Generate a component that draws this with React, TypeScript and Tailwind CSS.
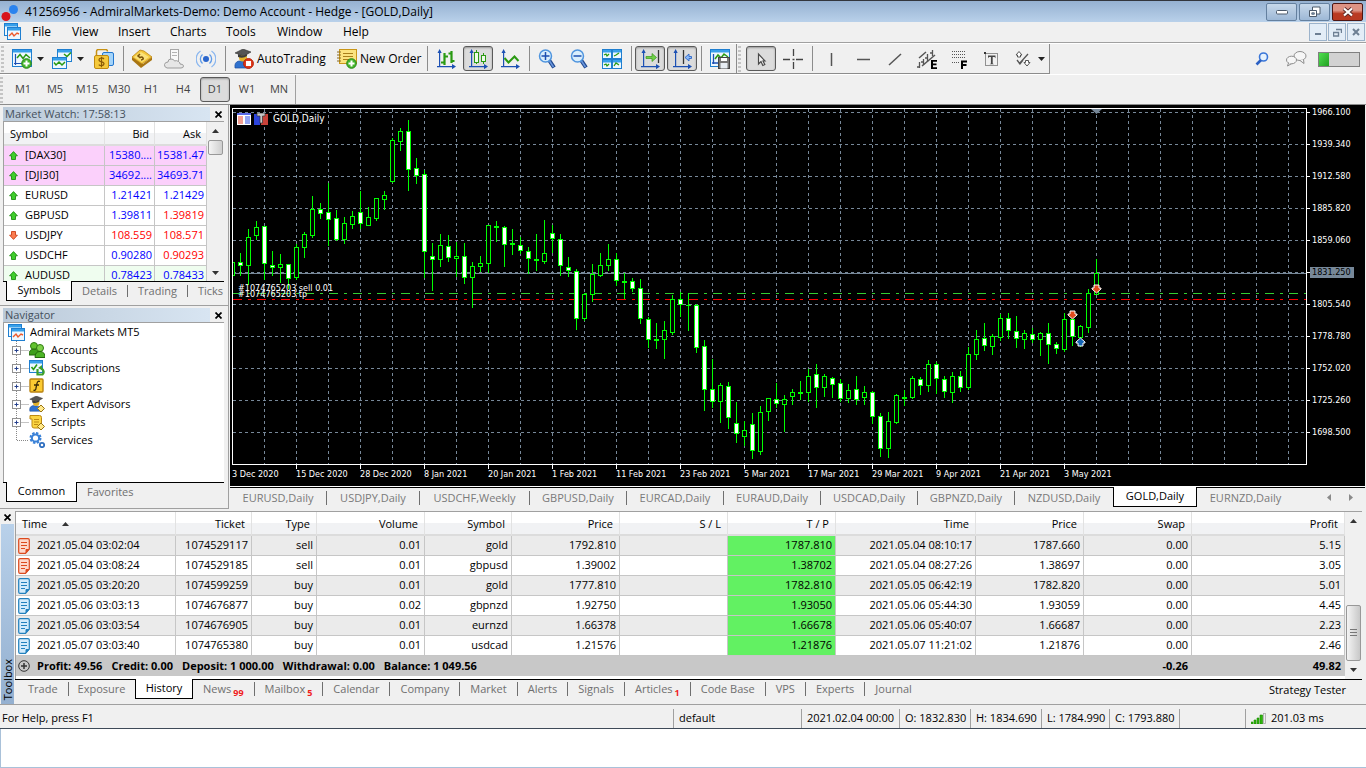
import React from "react";

type Svg = React.ReactNode;

function Icon({ children, size = 20 }: { children: Svg; size?: number }) {
  return (
    <svg width={size} height={size} viewBox={`0 0 ${size} ${size}`} aria-hidden="true" className="shrink-0">
      {children}
    </svg>
  );
}

/* ---------- icon pieces ---------- */

function MiniWindow({ x, y, w, h }: { x: number; y: number; w: number; h: number }) {
  return (
    <g>
      <rect x={x + 0.5} y={y + 0.5} width={w - 1} height={h - 1} fill="#eef8ff" stroke="#1f7fd0" />
      <rect x={x + 1} y={y + 1} width={w - 2} height={2.5} fill="#38a0ea" />
    </g>
  );
}

function PlusBadge({ cx, cy, r = 5 }: { cx: number; cy: number; r?: number }) {
  return (
    <g>
      <circle cx={cx} cy={cy} r={r} fill="#43b52b" stroke="#2a8718" />
      <path d={`M${cx - 3} ${cy}h6M${cx} ${cy - 3}v6`} stroke="#fff" strokeWidth="2" />
    </g>
  );
}

function Axes() {
  return (
    <g fill="#1c50b4">
      <path d="M3 2h1.200v16H3zM1 17h17v1.200H1z" />
      <path d="M1.500 4L3.600 0l2.100 4zM16 15l4 2.600-4 2.600z" />
    </g>
  );
}

const AppLogo = () => (
  <Icon size={18}>
    <circle cx="13.500" cy="6.500" r="4.500" fill="#2b83ee" />
    <circle cx="6" cy="13.500" r="4.500" fill="#d8141c" />
  </Icon>
);

const MtIcon = () => (
  <Icon size={18}>
    <MiniWindow x={0} y={0} w={14} h={13} />
    <MiniWindow x={3} y={4} w={14} h={13} />
    <path d="M5 13l3-3 2 3 3-3 2 1" fill="none" stroke="#ee5a2c" strokeWidth="1.4" />
  </Icon>
);

const NewChartIcon = () => (
  <Icon>
    <MiniWindow x={0} y={0} w={20} h={18} />
    <path d="M3.500 5v11M2 14.500h8" stroke="#1c50b4" strokeWidth="1.200" />
    <path d="M5 9l3-3.500 3 4 3-4 4 3.500" fill="none" stroke="#2a9a12" strokeWidth="1.500" />
    <PlusBadge cx={14.5} cy={14.5} r={4.800} />
  </Icon>
);

const ProfilesIcon = () => (
  <Icon>
    <MiniWindow x={5} y={0} w={15} h={13} />
    <path d="M12 5l3 2.500 4-4" fill="none" stroke="#2a9a12" strokeWidth="1.500" />
    <MiniWindow x={0} y={8} w={15} h={12} />
    <path d="M2 13.500l2 2.500 3-3 3 3 3-3" fill="none" stroke="#2a9a12" strokeWidth="1.500" />
  </Icon>
);

const DollarIcon = () => (
  <Icon>
    <path d="M2.500 8V2.500q0-2 2-2h7q2 0 2 2" fill="none" stroke="#c79112" strokeWidth="1.500" />
    <rect x="8.500" y="3.500" width="11" height="13" rx="1.500" fill="#a4d4fa" stroke="#2377cf" />
    <path d="M2 6.500h11q1.500 0 1.500 1.500v10q0 1.500-1.500 1.500H2q-1.500 0-1.500-1.500V8q0-1.500 1.500-1.500z" fill="#f5c93c" stroke="#c08a10" />
    <path d="M10 10q-1-1.200-3-1-2 .2-2 1.800t2.500 2 2.500 2-2.200 1.900q-2 .1-3-1.100M7.500 7.800v10.500" fill="none" stroke="#8a5a06" strokeWidth="1.200" />
  </Icon>
);

const DepthIcon = () => (
  <Icon>
    <path d="M0 11l9 8 11-8v-3L11 15 0 8z" fill="#a87512" />
    <path d="M0 8l8-7 4 1 8 6-10 7z" fill="#f4c93d" stroke="#bb8414" strokeWidth=".8" />
    <path d="M2 8l7-5 8 5-7 5z" fill="#fbe27a" />
    <path d="M8 5l-2 2 2 1.500q2-1 3 .5t-2 2" fill="none" stroke="#7a5208" strokeWidth="1.500" />
  </Icon>
);

const CloudIcon = () => (
  <Icon>
    <rect x="6.500" y=".5" width="8" height="13" fill="#fafafa" stroke="#a7a7a7" />
    <path d="M8 3.500h5M8 6.500h5" stroke="#b4b4b4" />
    <path d="M3 19q-3-1-2.500-3.500T4 13q0-3 3-3t3.500 2q2-1 4 .5t1.500 2.500q3.500 0 3.500 2t-2.500 2z" fill="#e6e6e6" stroke="#9c9c9c" />
  </Icon>
);

const SignalIcon = () => (
  <Icon>
    <circle cx="10" cy="10" r="3" fill="#2a66cc" />
    <g fill="none" stroke="#5f9be8" strokeWidth="1.300">
      <path d="M6.500 5.500a5.800 5.800 0 000 9M13.500 5.500a5.800 5.800 0 010 9" />
      <path d="M4.500 2a9.600 9.600 0 000 16M15.500 2a9.600 9.600 0 010 16" stroke="#8bb7ef" />
    </g>
  </Icon>
);

const Professor = () => (
  <g>
    <path d="M1 19q-1-6 4-7l8 1 3 6z" fill="#2f72cf" stroke="#1c4f9e" strokeWidth=".7" />
    <circle cx="9" cy="8.500" r="4" fill="#e0b12a" />
    <path d="M1 4l8-4 8 3-7 4z" fill="#555" stroke="#333" strokeWidth=".6" />
    <path d="M4 5v3q5 2 9-1V5l-4 2z" fill="#3c3c3c" />
  </g>
);

const AutoTradingIcon = () => (
  <Icon>
    <Professor />
    <circle cx="14.500" cy="14.500" r="4.900" fill="#e03a1c" stroke="#b52008" />
    <rect x="12" y="12" width="5" height="5" fill="#fff" />
  </Icon>
);

const NewOrderIcon = () => (
  <Icon>
    <rect x="2.500" y=".5" width="17" height="14" fill="#fbe37f" stroke="#c99618" />
    <path d="M6 4.500h10M6 7.500h10M6 10.500h6" stroke="#a87f1a" />
    <path d="M0 3h4M0 6h4M0 9h4M0 12h4" stroke="#8a6a20" />
    <PlusBadge cx={14.5} cy={14.5} r={4.800} />
  </Icon>
);

const BarsIcon = () => (
  <Icon>
    <Axes />
    <path d="M8.500 4v12M5 13.500h3M9 7.500h3M15.500 2v12M12.500 4.500h3M16 12h2.500" stroke="#2a9a12" strokeWidth="2.200" />
  </Icon>
);

const CandlesIcon = () => (
  <Icon>
    <Axes />
    <path d="M8.500 1v14M15.500 4v11" stroke="#2a9a12" />
    <rect x="6.500" y="3.500" width="4" height="10" fill="#eefbe9" stroke="#2a9a12" />
    <rect x="13.500" y="6.500" width="4" height="6" fill="#eefbe9" stroke="#2a9a12" />
  </Icon>
);

const LineIcon = () => (
  <Icon>
    <Axes />
    <path d="M4.500 9l4 4.500 6-6 4 4.500" fill="none" stroke="#2a9a12" strokeWidth="2" />
  </Icon>
);

function ZoomIcon({ plus }: { plus: boolean }) {
  return (
    <Icon>
      <path d="M11 11l5 7.500" stroke="#224a90" strokeWidth="4" />
      <path d="M11.500 12l4 6" stroke="#6a97de" strokeWidth="1.500" />
      <circle cx="7.500" cy="7" r="6" fill="#d9eefc" stroke="#4e94de" strokeWidth="1.500" />
      <path d={plus ? "M3.500 7h8M7.500 3v8" : "M3.500 7h8"} stroke="#1c4fb0" strokeWidth="1.500" />
    </Icon>
  );
}

const TileIcon = () => (
  <Icon>
    <MiniWindow x={0} y={0} w={10} h={10} />
    <MiniWindow x={10} y={0} w={10} h={10} />
    <MiniWindow x={0} y={10} w={10} h={10} />
    <MiniWindow x={10} y={10} w={10} h={10} />
    <path d="M2 6l2-1 1 2 2-2M12 7l2-1 3-2M2 16l2-1 1 2 2-2M12 17l2-3 3 2" fill="none" stroke="#2a9a12" strokeWidth="1.300" />
  </Icon>
);

const ShiftEndIcon = () => (
  <Icon>
    <Axes />
    <path d="M18.500 1v13" stroke="#333" strokeWidth="1.300" />
    <path d="M6 7.500h6V4.500l4.500 4-4.500 4v-3H6z" fill="#6fd048" stroke="#39951b" strokeWidth=".7" />
  </Icon>
);

const ShiftIcon = () => (
  <Icon>
    <Axes />
    <path d="M11.500 1v14" stroke="#333" strokeWidth="1.300" />
    <path d="M19.500 7.500H17V5l-4 3.500 4 3.500V9.500h2.500z" fill="#8ab9f7" stroke="#2b65c8" strokeWidth=".9" />
  </Icon>
);

const SaveTemplateIcon = () => (
  <Icon>
    <MiniWindow x={0} y={0} w={20} h={18} />
    <path d="M3.500 5v10M2 14h6" stroke="#1c50b4" strokeWidth="1.300" />
    <path d="M5 10l3-4 3 3 3-4 4 3" fill="none" stroke="#2a9a12" strokeWidth="1.500" />
    <rect x="8.500" y="8.500" width="11" height="11" fill="#777" stroke="#444" />
    <rect x="11" y="9" width="6" height="3" fill="#fff" />
    <rect x="10.500" y="14" width="7" height="5.500" fill="#e8eef4" />
  </Icon>
);

const CursorIcon = () => (
  <Icon>
    <path d="M7.500 5v10l2.500-2.500 1.800 4 2-1-1.800-3.500H14z" fill="#f4f4f4" stroke="#4a4a4a" strokeWidth="1.200" />
  </Icon>
);

const CrosshairIcon = () => (
  <Icon>
    <path d="M0 10.500h7M13 10.500h7M10.500 0v7M10.500 13v7M9.500 10.500h2" stroke="#444" strokeWidth="1.300" />
  </Icon>
);

const VLineIcon = () => (
  <Icon>
    <path d="M10.500 4v13" stroke="#555" strokeWidth="1.500" />
  </Icon>
);
const HLineIcon = () => (
  <Icon>
    <path d="M4 10.500h13" stroke="#555" strokeWidth="1.500" />
  </Icon>
);
const TrendIcon = () => (
  <Icon>
    <path d="M4 16L16 5" stroke="#555" strokeWidth="1.500" />
  </Icon>
);

const ChannelIcon = () => (
  <Icon>
    <path d="M2 9l7-6M5 17L18 6" stroke="#555" strokeWidth="1.500" />
    <path d="M2.500 13v6M6.500 10v6M10.500 5v8M15.500 1v6M0 18h3M4 13h3M8 9h3M13 4h3" stroke="#555" strokeWidth="1.300" />
    <path d="M14 11h6v1.800h-4v1.700h3.500v1.700H16v2h4V20h-6z" fill="#000" />
  </Icon>
);

const FiboIcon = () => (
  <Icon>
    <path d="M3 2.500h14M3 5.500h14M3 8.500h14M3 13.500h7" stroke="#555" strokeDasharray="1 1" />
    <path d="M12 11.500h6v2h-4V15h3.500v2H14v3h-2z" fill="#000" />
  </Icon>
);

const TextIcon = () => (
  <Icon>
    <rect x="4.500" y="4.500" width="12" height="12" fill="none" stroke="#333" strokeDasharray="1 1" />
    <path d="M7 6.500h7.500v2.800l-1-1.300H11.700v6.500l1.300.8H8.600l1.300-.8V8H8l-1 1.300z" fill="#444" />
    <rect x="3" y="3" width="2" height="2" fill="#333" />
  </Icon>
);

const ShapesIcon = () => (
  <Icon>
    <path d="M6 15l9-10M4 11l3 4 3-4" fill="none" stroke="#555" strokeWidth="1.300" />
    <path d="M3 6l3-3.500L9 6H7.500v2h-3V6zM11 13.500l3 3.500 3-3.500h-1.500v-2h-3v2z" fill="#fff" stroke="#555" />
  </Icon>
);

const Caret = () => (
  <svg width="7" height="4" viewBox="0 0 7 4" aria-hidden="true" className="shrink-0">
    <path d="M0 0h7L3.500 4z" fill="#222" />
  </svg>
);

const SearchIcon = () => (
  <Icon size={14}>
    <circle cx="8.500" cy="5" r="4" fill="#e6f2fd" stroke="#3a76d8" strokeWidth="1.600" />
    <path d="M6 8l-4.500 4.500" stroke="#2b60c4" strokeWidth="2.600" />
  </Icon>
);

const ChatIcon = () => (
  <Icon size={22}>
    <ellipse cx="15" cy="8" rx="6" ry="4.500" fill="#f6f6f6" stroke="#8e8e8e" />
    <path d="M15 12.500l4 3-.5-4" fill="#f6f6f6" stroke="#8e8e8e" />
    <ellipse cx="6.500" cy="12" rx="5" ry="3.800" fill="#f6f6f6" stroke="#8e8e8e" />
    <path d="M3.500 15l-1 3 4-2.300" fill="#f6f6f6" stroke="#8e8e8e" />
  </Icon>
);

/* ---------- toolbar ---------- */

function ToolButton({ label, active = false, children }: { label: string; active?: boolean; children: Svg }) {
  return (
    <button
      aria-label={label}
      className={
        active
          ? "mx-px flex h-[25px] w-[30px] shrink-0 items-center justify-center rounded-[3px] border border-[#5a5a5a] bg-[#dcdcdc] shadow-[inset_0_1px_2px_#999]"
          : "flex h-[25px] w-8 shrink-0 items-center justify-center"
      }
    >
      {children}
    </button>
  );
}

const Sep = () => <span className="mr-[2px] ml-[3px] h-[25px] w-px shrink-0 bg-[#8c8c8c]" />;
const Grip = () => (
  <span className="mr-1 h-[26px] w-[3px] shrink-0 bg-[repeating-linear-gradient(180deg,#c4c4c4_0px,#c4c4c4_2px,transparent_2px,transparent_4px)]" />
);

const menus = ["File", "View", "Insert", "Charts", "Tools", "Window", "Help"];
const menuWidths = ["w-10", "w-[46px]", "w-[52px]", "w-14", "w-[51px]", "w-[66px]", "w-10"];
const timeframes = ["M1", "M5", "M15", "M30", "H1", "H4", "D1", "W1", "MN"];

function TitleBar() {
  const button = "flex h-[18px] w-[31px] items-center justify-center rounded-[2px] border";
  return (
    <header className="flex h-[22px] shrink-0 items-center justify-between border-t border-[#33363c] bg-linear-to-b from-[#96b1d1] to-[#b9d1ea] pr-[3px]">
      <div className="flex items-center gap-[7px]">
        <AppLogo />
        <h1 className="text-[12px] whitespace-nowrap">41256956 - AdmiralMarkets-Demo: Demo Account - Hedge - [GOLD,Daily]</h1>
      </div>
      <div className="flex gap-[2px]">
        <button aria-label="Minimize" className={`${button} border-[#64809f] bg-linear-to-b from-[#c7d8ea] to-[#9db8d6]`}>
          <svg width="12" height="6" aria-hidden="true"><rect x=".5" y="1.500" width="11" height="3.500" rx="1" fill="#fff" stroke="#4c5a6b" /></svg>
        </button>
        <button aria-label="Restore" className={`${button} border-[#64809f] bg-linear-to-b from-[#c7d8ea] to-[#9db8d6]`}>
          <svg width="13" height="12" aria-hidden="true">
            <path d="M4.500 1h7.500v7h-7.500z" fill="#fff" stroke="#4c5a6b" />
            <path d="M1.500 4.500h7v6h-7z" fill="#fff" stroke="#4c5a6b" />
            <path d="M3.800 6.800h2.500v1.500H3.800z" fill="#8ba7c4" stroke="#4c5a6b" strokeWidth=".8" />
          </svg>
        </button>
        <button aria-label="Close" className={`${button} border-[#4d1613] bg-linear-to-b from-[#dd9384] from-40% to-[#b93a22] to-60%`}>
          <svg width="12" height="10" aria-hidden="true"><path d="M2 1.500l8 7M10 1.500l-8 7" stroke="#5a2a28" strokeWidth="4" /><path d="M2 1.500l8 7M10 1.500l-8 7" stroke="#fff" strokeWidth="2.200" /></svg>
        </button>
      </div>
    </header>
  );
}

function MenuBar() {
  const mdi = "flex h-[18px] w-[18px] items-center justify-center border border-[#9cb3cb] bg-[#e3edf7] text-[#6d7f93]";
  return (
    <nav className="flex h-[21px] shrink-0 items-center border-b border-[#a0a0a0] pl-1">
      <MtIcon />
      <ul className="flex flex-1 pl-[10px] text-[12px]">
        {menus.map((m, i) => (
          <li key={m} className={menuWidths[i]}>
            <button>{m}</button>
          </li>
        ))}
      </ul>
      <div className="flex gap-px pr-px">
        <button aria-label="Minimize chart" className={mdi}><svg width="8" height="8" aria-hidden="true"><path d="M1 6h6" stroke="currentColor" strokeWidth="2" /></svg></button>
        <button aria-label="Restore chart" className={mdi}><svg width="9" height="9" aria-hidden="true"><path d="M3 1.500h5.500V5M.5 4.500h5v3.500h-5z" fill="none" stroke="currentColor" strokeWidth="1.400" /></svg></button>
        <button aria-label="Close chart" className={mdi}><svg width="8" height="8" aria-hidden="true"><path d="M1 1l6 6M7 1L1 7" stroke="currentColor" strokeWidth="2" /></svg></button>
      </div>
    </nav>
  );
}

function MainToolbar() {
  return (
    <div className="flex h-[31px] shrink-0 items-center border-t border-white">
      <div className="flex h-full min-w-0 shrink-0 items-center border-r border-b border-[#8c8c8c] pl-px">
        <Grip />
        <button aria-label="New chart" className="flex w-10 shrink-0 items-center gap-[5px] pl-1"><NewChartIcon /><Caret /></button>
        <button aria-label="Profiles" className="flex w-10 shrink-0 items-center gap-[5px] pl-1"><ProfilesIcon /><Caret /></button>
        <ToolButton label="Symbols"><DollarIcon /></ToolButton>
        <Sep />
        <ToolButton label="Depth of market"><DepthIcon /></ToolButton>
        <ToolButton label="Virtual hosting"><CloudIcon /></ToolButton>
        <ToolButton label="Signals"><SignalIcon /></ToolButton>
        <Sep />
        <button className="flex w-[103px] shrink-0 items-center gap-[3px] pl-[6px] text-[12px]"><AutoTradingIcon />AutoTrading</button>
        <button className="flex w-[93px] shrink-0 items-center gap-[3px] pl-[6px] text-[12px] whitespace-nowrap"><NewOrderIcon />New Order</button>
        <Sep />
        <ToolButton label="Bar chart"><BarsIcon /></ToolButton>
        <ToolButton label="Candlesticks" active><CandlesIcon /></ToolButton>
        <ToolButton label="Line chart"><LineIcon /></ToolButton>
        <Sep />
        <ToolButton label="Zoom in"><ZoomIcon plus /></ToolButton>
        <ToolButton label="Zoom out"><ZoomIcon plus={false} /></ToolButton>
        <ToolButton label="Tile windows"><TileIcon /></ToolButton>
        <Sep />
        <ToolButton label="Auto scroll" active><ShiftEndIcon /></ToolButton>
        <ToolButton label="Chart shift" active><ShiftIcon /></ToolButton>
        <Sep />
        <ToolButton label="Templates"><SaveTemplateIcon /></ToolButton>
        <span className="mr-px h-full w-px bg-[#8c8c8c]" />
        <Grip />
        <ToolButton label="Cursor" active><CursorIcon /></ToolButton>
        <ToolButton label="Crosshair"><CrosshairIcon /></ToolButton>
        <Sep />
        <ToolButton label="Vertical line"><VLineIcon /></ToolButton>
        <ToolButton label="Horizontal line"><HLineIcon /></ToolButton>
        <ToolButton label="Trendline"><TrendIcon /></ToolButton>
        <ToolButton label="Equidistant channel"><ChannelIcon /></ToolButton>
        <ToolButton label="Fibonacci retracement"><FiboIcon /></ToolButton>
        <ToolButton label="Text label"><TextIcon /></ToolButton>
        <button aria-label="Objects" className="flex w-[42px] shrink-0 items-center gap-[5px] pl-[6px]"><ShapesIcon /><Caret /></button>
      </div>
      <div className="flex h-full flex-1 items-center justify-end gap-[11px] pr-[6px]">
        <button aria-label="Search" className="mr-[5px]"><SearchIcon /></button>
        <button aria-label="Chat"><ChatIcon /></button>
        <div className="flex h-[15px] w-[42px] border border-[#808080] bg-[#d2d2d2]">
          <span className="w-[10px] bg-linear-to-br from-[#4fe04f] to-[#22a022]" />
        </div>
      </div>
    </div>
  );
}

function TimeframeBar() {
  return (
    <div className="flex h-[31px] shrink-0 border-t border-b border-t-white border-b-[#8c8c8c]">
      <div className="flex items-center border-r border-[#a0a0a0]">
        <Grip />
        {timeframes.map((t) => (
          <button
            key={t}
            className={
              t === "D1"
                ? "mx-px h-[25px] w-[30px] rounded-[3px] border border-[#5a5a5a] bg-[#dcdcdc] text-[11px] text-[#444] shadow-[inset_0_1px_2px_#999]"
                : "h-[25px] w-8 text-[11px] text-[#444]"
            }
          >
            {t}
          </button>
        ))}
      </div>
    </div>
  );
}

/* ---------- left panels ---------- */

function Cross() {
  return (
    <svg width="7" height="7" viewBox="0 0 7 7" aria-hidden="true">
      <path d="M.5.5l6 6M6.500.5l-6 6" stroke="#000" strokeWidth="1.700" />
    </svg>
  );
}

function PanelCaption({ title }: { title: string }) {
  return (
    <div className="flex h-[14px] shrink-0 items-center">
      <h2 className="flex h-full flex-1 items-center bg-linear-to-r from-[#bbcad9] to-[#d8e5f2] pl-[2px] text-[11px] text-[#45505c]">{title}</h2>
      <button aria-label={`Close ${title}`} className="flex w-[14px] justify-end pr-[2px]"><Cross /></button>
    </div>
  );
}

type Quote = { s: string; up: boolean; bid: string; ask: string; bidUp: boolean; askUp: boolean; row: string };
const quotes: Quote[] = [
  { s: "[DAX30]", up: true, bid: "15380....", ask: "15381.47", bidUp: true, askUp: true, row: "bg-[#fbd0fb]" },
  { s: "[DJI30]", up: true, bid: "34692....", ask: "34693.71", bidUp: true, askUp: true, row: "bg-[#fbd0fb]" },
  { s: "EURUSD", up: true, bid: "1.21421", ask: "1.21429", bidUp: true, askUp: true, row: "bg-white" },
  { s: "GBPUSD", up: true, bid: "1.39811", ask: "1.39819", bidUp: true, askUp: false, row: "bg-white" },
  { s: "USDJPY", up: false, bid: "108.559", ask: "108.571", bidUp: false, askUp: false, row: "bg-white" },
  { s: "USDCHF", up: true, bid: "0.90280", ask: "0.90293", bidUp: true, askUp: false, row: "bg-white" },
  { s: "AUDUSD", up: true, bid: "0.78423", ask: "0.78433", bidUp: true, askUp: true, row: "bg-[#effdef]" },
];

function Arrow({ up }: { up: boolean }) {
  return (
    <svg width="9" height="9" viewBox="0 0 9 9" aria-hidden="true" className="shrink-0">
      {up ? (
        <path d="M4.500.6L8.400 4.800H6.500v3.700h-4V4.800H.6z" fill="#3fce2c" stroke="#1f8f13" strokeWidth=".9" />
      ) : (
        <path d="M4.500 8.400L8.400 4.200H6.500V.5h-4v3.700H.6z" fill="#fb7c50" stroke="#cc4218" strokeWidth=".9" />
      )}
    </svg>
  );
}

function ScrollArrow({ down = false }: { down?: boolean }) {
  return (
    <svg width="7" height="4" viewBox="0 0 7 4" aria-hidden="true">
      <path d={down ? "M0 0h7L3.500 4z" : "M0 4h7L3.500 0z"} fill="#333" />
    </svg>
  );
}

const quoteCell = "h-5 border-r border-b border-[#c6c6c6] p-0 pr-[2px] text-right";
const headCell =
  "h-[24px] border-r border-b-2 border-r-[#e2e2e2] border-b-[#dcdcdc] bg-linear-to-b from-white from-50% to-[#f1f2f4] to-50% p-0 pt-[2px] font-normal";

function MarketWatch() {
  return (
    <section className="flex h-[201px] shrink-0 flex-col border-b border-[#a0a0a0] pt-[2px] pr-1 pl-[3px]">
      <PanelCaption title="Market Watch: 17:58:13" />
      <div className="flex min-h-0 flex-1 overflow-hidden border-t border-l border-[#a0a0a0] bg-white">
        <table className="h-fit flex-1 table-fixed border-separate border-spacing-0 text-[11px]">
          <colgroup>
            <col />
            <col className="w-[50px]" />
            <col className="w-[52px]" />
          </colgroup>
          <thead>
            <tr>
              <th className={`${headCell} pl-[6px] text-left`}>Symbol</th>
              <th className={`${headCell} pr-[5px] text-right`}>Bid</th>
              <th className={`${headCell} pr-[5px] text-right`}>Ask</th>
            </tr>
          </thead>
          <tbody>
            {quotes.map((q) => (
              <tr key={q.s} className={q.row}>
                <td className="h-5 border-r border-b border-[#c6c6c6] p-0 pl-[5px]">
                  <span className="flex items-center gap-[7px]"><Arrow up={q.up} />{q.s}</span>
                </td>
                <td className={q.bidUp ? `${quoteCell} text-[#0000ff]` : `${quoteCell} text-[#f00]`}>{q.bid}</td>
                <td className={q.askUp ? `${quoteCell} text-[#0000ff]` : `${quoteCell} text-[#f00]`}>{q.ask}</td>
              </tr>
            ))}
          </tbody>
        </table>
        <div className="flex w-[17px] flex-col items-center justify-between bg-[#f0f0f0] pt-[7px] pb-[6px]">
          <span className="flex flex-col items-center gap-[7px]">
            <ScrollArrow />
            <span className="h-[15px] w-[15px] rounded-[2px] border border-[#989898] bg-linear-to-r from-[#f4f4f4] to-[#cfcfcf]" />
          </span>
          <ScrollArrow down />
        </div>
      </div>
      <div className="flex h-6 shrink-0 items-start overflow-hidden text-[11px] text-[#6f6f6f]">
        <span className="h-px w-[3px] bg-black" />
        <button className="h-5 w-[66px] border border-t-0 border-black bg-white text-black">Symbols</button>
        <div className="flex h-full flex-1 items-start overflow-hidden border-t border-black pt-[3px]">
          <button className="h-3 border-r border-[#6f6f6f] px-[10px] leading-[12px]">Details</button>
          <button className="h-3 border-r border-[#6f6f6f] px-[10px] leading-[12px]">Trading</button>
          <button className="h-3 pl-[10px] leading-[12px]">Ticks</button>
        </div>
      </div>
    </section>
  );
}

const treeIcons: Record<string, Svg> = {
  Accounts: (
    <Icon size={16}>
      <circle cx="5" cy="4" r="3.500" fill="#62c22e" stroke="#2e7b10" />
      <path d="M0 13q0-6 5-6t5 6z" fill="#3fa01c" stroke="#23690a" />
      <circle cx="11" cy="6" r="3.500" fill="#7ed14a" stroke="#2e7b10" />
      <path d="M6 15.500q0-6 5-6t5 6z" fill="#4db526" stroke="#23690a" />
    </Icon>
  ),
  Subscriptions: (
    <Icon size={16}>
      <MiniWindow x={0} y={0} w={14} h={13} />
      <path d="M2.500 7l2 2.500L8 4.500" fill="none" stroke="#2a9a12" strokeWidth="1.600" />
      <path d="M8.500 9v5.500h5q2-2 .5-4.500L12 8" fill="none" stroke="#3d9f28" strokeWidth="2.200" />
      <path d="M9 8l4-3v5z" fill="#3d9f28" />
    </Icon>
  ),
  Indicators: (
    <Icon size={16}>
      <rect x="1" y="1" width="13" height="13" rx="1" fill="#fbcb32" stroke="#b98310" strokeWidth="1.400" />
      <path d="M11 3.500q-2.500-1-3 2L6.800 11q-.5 1.800-2.300 1.200M5 7h5" fill="none" stroke="#3c2c06" strokeWidth="1.300" />
    </Icon>
  ),
  "Expert Advisors": (
    <Icon size={16}>
      <g transform="scale(.8)"><Professor /></g>
      <path d="M12 9l3.500 3.500L12 16l-3.500-3.500z" fill="#ffe98c" stroke="#9a7412" />
    </Icon>
  ),
  Scripts: (
    <Icon size={16}>
      <path d="M1 1.500h9.500q2 0 2 2V14H5q-2 0-2-2V5H1z" fill="#fbd443" stroke="#bd8a12" />
      <path d="M5 5.500h5M5 8h5M5 10.500h4" stroke="#bd8a12" />
      <path d="M12 9l3.500 3.500L12 16l-3.500-3.500z" fill="#ffe98c" stroke="#9a7412" />
    </Icon>
  ),
  Services: (
    <Icon size={16}>
      <circle cx="6.500" cy="6" r="4.600" fill="none" stroke="#3c83d8" strokeWidth="2.800" strokeDasharray="2.200 1.400" />
      <circle cx="6.500" cy="6" r="3.600" fill="#fff" stroke="#3c83d8" strokeWidth="2" />
      <circle cx="13" cy="13" r="2.200" fill="#fff" stroke="#2f6fc0" strokeWidth="1.800" />
    </Icon>
  ),
};

function Navigator() {
  const names = Object.keys(treeIcons);
  return (
    <section className="flex min-h-0 flex-1 flex-col pt-[2px] pr-1 pl-[3px]">
      <PanelCaption title="Navigator" />
      <div className="min-h-0 flex-1 overflow-hidden border-t border-l border-[#a0a0a0] bg-white text-[11px]">
        <div className="flex h-[18px] items-center gap-1 pt-px pl-1"><MtIcon />Admiral Markets MT5</div>
        <ul>
          {names.map((n, i) => (
            <li key={n} className="flex h-[18px] items-center pl-2">
              <svg width="17" height="18" aria-hidden="true" className="shrink-0">
                <path d={i === names.length - 1 ? "M4.500 0V9.500H17" : "M4.500 0V18M4.500 9.500H17"} fill="none" stroke="#888" strokeDasharray="1 1" />
                {i < names.length - 1 && (
                  <g>
                    <rect x=".5" y="5.500" width="8" height="8" fill="#fff" stroke="#919191" />
                    <path d="M2.500 9.500h4M4.500 7.500v4" stroke="#26408c" />
                  </g>
                )}
              </svg>
              <button className="flex items-center gap-[6px]">{treeIcons[n]}{n}</button>
            </li>
          ))}
        </ul>
      </div>
      <div className="flex h-[26px] shrink-0 items-start text-[11px] text-[#6f6f6f]">
        <span className="h-px w-[3px] bg-black" />
        <button className="h-5 w-[71px] border border-t-0 border-black bg-white text-black">Common</button>
        <div className="flex h-full flex-1 items-start border-t border-black pt-[3px]">
          <button className="h-3 px-[10px] leading-[12px]">Favorites</button>
        </div>
      </div>
    </section>
  );
}

/* ---------- chart ---------- */

/* Each candle: high, body top, body bottom, low, filled (1) or hollow (0). */
const candles: number[][] = [
  [262,262,276,276,0],[253,262,266,276,1],[229,237,266,285,0],[221,227,236,240,0],[226,226,264,280,1],[251,265,268,276,1],
  [254,264,268,283,0],[264,264,279,289,1],[244,247,278,280,0],[232,234,248,258,0],[196,209,236,238,0],[203,209,214,219,1],
  [183,212,220,246,1],[210,218,240,241,1],[217,223,240,244,0],[211,216,225,229,0],[191,212,224,229,1],[207,217,226,226,0],
  [198,198,219,221,0],[191,195,200,210,0],[138,140,182,183,0],[128,131,142,151,0],[120,131,170,191,1],[158,168,176,184,1],
  [170,174,252,278,1],[243,256,260,291,1],[234,245,260,267,0],[235,246,258,262,1],[242,256,259,277,0],[243,256,278,284,1],
  [262,266,278,308,0],[256,263,267,272,0],[225,225,264,273,0],[221,226,228,242,1],[226,227,245,267,1],[229,243,245,255,1],
  [237,245,251,254,1],[247,251,259,274,1],[234,259,261,271,1],[220,253,262,264,0],[225,233,239,253,1],[234,239,266,276,1],
  [257,267,271,277,1],[269,271,319,330,1],[293,294,319,321,0],[264,274,295,302,0],[253,265,276,277,0],[244,259,266,271,0],
  [253,259,281,286,1],[273,281,283,299,1],[278,281,289,292,1],[279,288,319,324,1],[317,319,340,348,1],[323,339,341,349,1],
  [321,330,340,359,0],[295,299,333,335,0],[292,299,305,317,1],[293,305,306,331,1],[304,305,348,353,1],[340,346,390,411,1],
  [359,389,402,408,1],[383,385,402,423,0],[382,386,418,429,1],[402,423,434,443,1],[421,430,437,446,0],[413,424,451,459,1],
  [406,412,452,455,0],[398,398,412,421,0],[383,399,404,408,1],[395,399,405,432,0],[389,392,397,405,0],[381,392,394,400,1],
  [369,376,393,402,0],[364,374,388,408,1],[374,376,388,397,0],[377,378,385,398,1],[379,383,399,402,1],[384,390,399,403,0],
  [376,389,400,405,1],[386,392,398,405,0],[391,392,417,424,1],[413,416,449,457,1],[412,421,449,458,0],[394,395,423,424,0],
  [390,397,399,406,1],[376,378,398,399,0],[377,379,386,395,1],[360,364,386,392,0],[362,364,379,394,1],[376,379,392,398,1],
  [372,376,393,403,0],[371,376,388,392,1],[347,354,388,390,0],[330,339,355,360,0],[323,338,346,351,1],[334,336,347,355,0],
  [314,318,338,341,0],[313,318,331,339,1],[316,331,339,348,1],[330,333,340,349,0],[328,334,340,343,1],[332,333,340,356,0],
  [323,333,345,364,1],[342,344,349,354,1],[313,319,350,352,0],[318,319,337,346,1],[325,326,338,347,0],[289,293,328,333,0],
  [259,273,295,295,0],
];
const ORIGIN_Y = 109;
const STEP = 8;
const GRID = 32;
const prices = ["1966.100", "1939.340", "1912.580", "1885.820", "1859.060", "1831.250", "1805.540", "1778.780", "1752.020", "1725.260", "1698.500"];
const dates = ["3 Dec 2020", "15 Dec 2020", "28 Dec 2020", "8 Jan 2021", "20 Jan 2021", "1 Feb 2021", "11 Feb 2021", "23 Feb 2021", "5 Mar 2021", "17 Mar 2021", "29 Mar 2021", "9 Apr 2021", "21 Apr 2021", "3 May 2021"];

function Marker({ x, y, up }: { x: number; y: number; up: boolean }) {
  return (
    <path
      transform={`translate(${x} ${y})${up ? " scale(1 -1)" : ""}`}
      d="M0 4.500L-4.500.5V-.5H-2.500V-3.500H2.500V-.5H4.500V.5z"
      fill={up ? "#1464b4" : "#e04a1c"}
      stroke="#fff"
    />
  );
}

function PricePlot() {
  return (
    <svg className="absolute inset-0 h-full w-full" role="img" aria-label="GOLD daily candlestick chart">
      <g shapeRendering="crispEdges">
        <g stroke="#778899" strokeDasharray="3 3">
          {Array.from({ length: 60 }, (_, i) => (
            <line key={i} x1={31.5 + i * GRID} x2={31.5 + i * GRID} y1="0" y2="100%" />
          ))}
          {prices.map((p, i) => (
            <line key={p} x1="0" x2="100%" y1={3.5 + i * GRID} y2={3.5 + i * GRID} />
          ))}
        </g>
        <line x1="0" x2="100%" y1="164.500" y2="164.500" stroke="#778899" />
        <line x1="0" x2="100%" y1="184.500" y2="184.500" stroke="#32cd32" strokeDasharray="9 6 3 6" />
        <line x1="0" x2="100%" y1="190.500" y2="190.500" stroke="#f00" strokeDasharray="9 6 3 6" />
        {candles.map(([high, top, bottom, low, filled], i) => {
          const x = i * STEP - 1;
          return (
            <g key={i}>
              <rect x={x} y={high - ORIGIN_Y} width="1" height={low - high} fill="#0f0" />
              <rect x={x - 2} y={top - ORIGIN_Y} width="5" height={bottom - top} fill="#0f0" />
              {bottom - top > 2 && (
                <rect x={x - 1} y={top + 1 - ORIGIN_Y} width="3" height={bottom - top - 2} fill={filled ? "#fff" : "#000"} />
              )}
            </g>
          );
        })}
      </g>
      <path d="M858 0h11l-5.500 5z" fill="#778899" />
      <Marker x={839.5} y={205.5} up={false} />
      <Marker x={863.5} y={179.5} up={false} />
      <Marker x={847.5} y={233.5} up />
    </svg>
  );
}

function Chart() {
  return (
    <section className="flex min-h-0 flex-1 bg-black pl-[2px] font-['DejaVu_Sans_Condensed','DejaVu_Sans',sans-serif] text-[9px] text-white">
      <div className="flex min-w-0 flex-1 flex-col pt-[3px]">
        <div className="relative min-h-0 flex-1 overflow-hidden border border-white">
          <PricePlot />
          <div className="absolute top-[2px] left-1 flex items-center gap-[3px]">
            <svg width="14" height="12" aria-hidden="true">
              <rect width="14" height="12" fill="#fff" />
              <rect width="14" height="2" fill="#5a6be8" />
              <path d="M1 4h5M1 6h5M1 8h5M1 10h5" stroke="#f08070" strokeWidth="1.300" />
              <path d="M8 4h5M8 6h5M8 8h5M8 10h5" stroke="#7088f0" strokeWidth="1.300" />
            </svg>
            <svg width="14" height="12" aria-hidden="true">
              <path d="M0 1h6v11H0z" fill="#2c44dc" />
              <path d="M7 1h7v11H7z" fill="#c8423a" />
              <path d="M3 0h8v3H8.500v7H6V3H3z" fill="#c9c9c9" stroke="#333" strokeWidth=".7" />
            </svg>
            <h2 className="ml-[2px] text-[10px]">GOLD,Daily</h2>
          </div>
          <p className="absolute top-[173px] left-[5px] leading-[12px]">#1074765203 sell 0.01</p>
          <p className="absolute top-[179px] left-[5px] leading-[12px]">#1074765203 tp</p>
        </div>
        <ol className="flex h-[21px] shrink-0 overflow-hidden">
          {dates.map((d, i) => (
            <li key={d} className="flex w-16 shrink-0 flex-col whitespace-nowrap">
              <span className={i === 0 ? "h-1 w-px" : "h-1 w-px bg-white"} />
              <span className="leading-[11px]">{d}</span>
            </li>
          ))}
        </ol>
      </div>
      <ol className="flex w-[58px] shrink-0 flex-col gap-[18px] overflow-hidden">
        {prices.map((p) => (
          <li key={p} className="flex h-[15px] -mb-px items-center">
            <span className="h-px w-[3px] bg-white" />
            <span className={p === "1831.250" ? "w-[44px] bg-[#778899] pl-[2px] leading-[11px] text-black" : "pl-[2px] leading-[11px]"}>{p}</span>
          </li>
        ))}
      </ol>
    </section>
  );
}

const chartTabs: { t: string; w: string }[] = [
  { t: "EURUSD,Daily", w: "w-[97px]" },
  { t: "USDJPY,Daily", w: "w-[93px]" },
  { t: "USDCHF,Weekly", w: "w-[110px]" },
  { t: "GBPUSD,Daily", w: "w-[97px]" },
  { t: "EURCAD,Daily", w: "w-[97px]" },
  { t: "EURAUD,Daily", w: "w-[97px]" },
  { t: "USDCAD,Daily", w: "w-[97px]" },
  { t: "GBPNZD,Daily", w: "w-[97px]" },
  { t: "NZDUSD,Daily", w: "w-[98px]" },
  { t: "GOLD,Daily", w: "w-[84px]" },
  { t: "EURNZD,Daily", w: "w-[97px]" },
];

function ChartTabs() {
  return (
    <div className="flex h-[23px] shrink-0 overflow-hidden border-t border-white text-[11px] text-[#7a7a7a]">
      {chartTabs.map(({ t, w }, i) =>
        t === "GOLD,Daily" ? (
          <button key={t} className={`${w} h-5 shrink-0 border border-t-0 border-black bg-white text-black`}>{t}</button>
        ) : (
          <span key={t} className={`${w} flex h-full shrink-0 items-start border-t border-black pt-[3px]`}>
            <button className={i === 8 || i === 10 ? "h-[14px] flex-1 leading-[14px]" : "h-[14px] flex-1 border-r border-[#6f6f6f] leading-[14px]"}>{t}</button>
          </span>
        )
      )}
      <div className="flex flex-1 items-start justify-end gap-[18px] border-t border-black pt-[6px] pr-3">
        <button aria-label="Previous tabs"><svg width="4" height="7" className="block" aria-hidden="true"><path d="M4 0v7L0 3.500z" fill="#8a8a8a" /></svg></button>
        <button aria-label="Next tabs"><svg width="4" height="7" className="block" aria-hidden="true"><path d="M0 0v7l4-3.500z" fill="#8a8a8a" /></svg></button>
      </div>
    </div>
  );
}

/* ---------- toolbox ---------- */

const columns = ["Time", "Ticket", "Type", "Volume", "Symbol", "Price", "S / L", "T / P", "Time", "Price", "Swap", "Profit"];
const colWidths = ["w-[160px]", "w-[76px]", "w-[65px]", "w-[108px]", "w-[87px]", "w-[108px]", "w-[108px]", "w-[108px]", "w-[140px]", "w-[108px]", "w-[108px]", ""];
const deals: string[][] = [
  ["2021.05.04 03:02:04", "1074529117", "sell", "0.01", "gold", "1792.810", "", "1787.810", "2021.05.04 08:10:17", "1787.660", "0.00", "5.15"],
  ["2021.05.04 03:08:24", "1074529185", "sell", "0.01", "gbpusd", "1.39002", "", "1.38702", "2021.05.04 08:27:26", "1.38697", "0.00", "3.05"],
  ["2021.05.05 03:20:20", "1074599259", "buy", "0.01", "gold", "1777.810", "", "1782.810", "2021.05.05 06:42:19", "1782.820", "0.00", "5.01"],
  ["2021.05.06 03:03:13", "1074676877", "buy", "0.02", "gbpnzd", "1.92750", "", "1.93050", "2021.05.06 05:44:30", "1.93059", "0.00", "4.45"],
  ["2021.05.06 03:03:54", "1074676905", "buy", "0.01", "eurnzd", "1.66378", "", "1.66678", "2021.05.06 05:40:07", "1.66687", "0.00", "2.23"],
  ["2021.05.07 03:03:40", "1074765380", "buy", "0.01", "usdcad", "1.21576", "", "1.21876", "2021.05.07 11:21:02", "1.21876", "0.00", "2.46"],
];

function DealIcon({ sell }: { sell: boolean }) {
  const line = sell ? "#dc4a1e" : "#2180bd";
  return (
    <svg width="12" height="16" viewBox="0 0 12 16" aria-hidden="true" className="shrink-0">
      <path d="M2 .7h8q1.300 0 1.300 1.300v9L7.500 15.300H2Q.7 15.300.7 14V2Q.7.7 2 .7z" fill={sell ? "#fdd9cc" : "#d3ebfb"} stroke={line} strokeWidth="1.200" />
      <path d="M3 4.500h6M3 7.500h6M3 10.500h4" stroke={line} />
      <path d="M8 14.500V11.500H11z" fill={line} stroke={line} />
    </svg>
  );
}

function HistoryTable() {
  const cell = "h-5 border-r border-b border-[#c6c6c6] p-0 pr-[3px] text-right";
  return (
    <table className="w-full table-fixed border-separate border-spacing-0 text-[11px]">
      <colgroup>
        {colWidths.map((w, i) => <col key={i} className={w} />)}
      </colgroup>
      <thead>
        <tr>
          {columns.map((c, i) => (
            <th key={i} className={i === 0 ? `${headCell} pl-[6px] text-left` : `${headCell} pr-[6px] text-right`}>
              {i === 0 ? <span className="flex items-center gap-[15px]">{c}<ScrollArrow /></span> : c}
            </th>
          ))}
        </tr>
      </thead>
      <tbody>
        {deals.map((d, r) => (
          <tr key={d[1]} className={r % 2 === 0 ? "bg-[#ebebeb]" : "bg-white"}>
            {d.map((v, i) =>
              i === 0 ? (
                <td key={i} className="h-5 border-r border-b border-[#c6c6c6] p-0 pl-[2px]">
                  <span className="flex h-[19px] items-center gap-[7px]"><DealIcon sell={d[2] === "sell"} />{v}</span>
                </td>
              ) : (
                <td key={i} className={i === 7 ? `${cell} bg-[#62f162]` : cell}>{v}</td>
              )
            )}
          </tr>
        ))}
      </tbody>
      <tfoot>
        <tr className="bg-[#c8c8c8] font-bold">
          <td colSpan={10} className="h-5 p-0 pl-[2px]">
            <span className="flex items-center gap-[7px]">
              <svg width="12" height="12" aria-hidden="true"><circle cx="6" cy="6" r="5.300" fill="none" stroke="#333" /><path d="M3 6h6M6 3v6" stroke="#333" strokeWidth="1.500" /></svg>
              <span className="flex gap-[9px]">
                <span>Profit: 49.56</span>
                <span>Credit: 0.00</span>
                <span>Deposit: 1 000.00</span>
                <span>Withdrawal: 0.00</span>
                <span>Balance: 1 049.56</span>
              </span>
            </span>
          </td>
          <td className="p-0 pr-1 text-right">-0.26</td>
          <td className="p-0 pr-1 text-right">49.82</td>
        </tr>
      </tfoot>
    </table>
  );
}

const tabsBefore = ["Trade", "Exposure"];
const tabsAfter: { t: string; n?: string }[] = [
  { t: "News", n: "99" }, { t: "Mailbox", n: "5" }, { t: "Calendar" }, { t: "Company" }, { t: "Market" }, { t: "Alerts" }, { t: "Signals" },
  { t: "Articles", n: "1" }, { t: "Code Base" }, { t: "VPS" }, { t: "Experts" }, { t: "Journal" },
];

function Toolbox() {
  return (
    <section className="flex shrink-0 border-b border-[#a0a0a0] pt-[2px] pr-1">
      <div className="flex w-[15px] shrink-0 flex-col items-center pr-px">
        <button aria-label="Close Toolbox" className="flex h-[13px] items-center"><Cross /></button>
        <h2 className="flex w-[13px] flex-1 items-center bg-linear-to-b from-[#b9d1ea] to-[#94b0d0] pb-1 text-[11px] leading-[13px] [writing-mode:sideways-lr]">Toolbox</h2>
      </div>
      <div className="min-w-0 flex-1">
        <div className="flex border-t border-l border-[#a0a0a0] bg-white">
          <div className="min-w-0 flex-1 pb-[3px]"><HistoryTable /></div>
          <div className="flex w-[17px] flex-col items-center bg-[#f0f0f0] pt-[7px] pb-[7px]">
            <ScrollArrow />
            <span className="flex-1" />
            <span className="mb-[7px] flex h-[56px] w-[15px] items-center justify-center rounded-[2px] border border-[#989898] bg-linear-to-r from-[#f4f4f4] to-[#c8c8c8]">
              <span className="h-[8px] w-[7px] bg-[repeating-linear-gradient(180deg,#777_0px,#777_1px,transparent_1px,transparent_3px)]" />
            </span>
            <ScrollArrow down />
          </div>
        </div>
        <div className="flex h-[25px] items-start text-[11px] text-[#6f6f6f]">
          <div className="flex h-full w-[120px] shrink-0 items-start border-t border-black pt-[2px] pl-[3px]">
            {tabsBefore.map((t, i) => (
              <button key={t} className={i === 0 ? "h-[14px] border-r border-[#6f6f6f] px-[10px] leading-[14px]" : "h-[14px] px-[9px] leading-[14px]"}>{t}</button>
            ))}
          </div>
          <button className="h-5 w-[58px] shrink-0 border border-t-0 border-black bg-white text-black">History</button>
          <div className="flex h-full flex-1 items-start border-t border-black pt-[2px]">
            {tabsAfter.map(({ t, n }, i) => (
              <button key={t} className={i === tabsAfter.length - 1 ? "h-[14px] px-[10px] leading-[14px]" : "flex h-[14px] border-r border-[#6f6f6f] px-[10px] leading-[14px] whitespace-nowrap"}>
                {t}
                {n && <span className="ml-[2px] pt-1 text-[9px] font-bold text-[#f01c1c]">{n}</span>}
              </button>
            ))}
            <button className="ml-auto pr-4 leading-[16px] whitespace-nowrap text-black">Strategy Tester</button>
          </div>
        </div>
      </div>
    </section>
  );
}

function StatusBar() {
  const cell = "flex h-[19px] shrink-0 items-center border-l border-[#a0a0a0] pl-[5px] whitespace-nowrap";
  return (
    <footer className="flex h-[24px] shrink-0 items-center border-b border-[#3e4a58] pt-[3px] text-[11px]">
      <p className="flex-1 pl-[2px]">For Help, press F1</p>
      <span className={`${cell} w-[128px]`}>default</span>
      <span className={`${cell} w-[98px]`}>2021.02.04 00:00</span>
      <span className={`${cell} w-[71px]`}>O: 1832.830</span>
      <span className={`${cell} w-[71px]`}>H: 1834.690</span>
      <span className={`${cell} w-[68px]`}>L: 1784.990</span>
      <span className={`${cell} w-[70px]`}>C: 1793.880</span>
      <span className={`${cell} w-[66px]`} />
      <span className={`${cell} w-[121px] gap-[5px]`}>
        <svg width="15" height="11" aria-hidden="true">
          <path d="M0 9h2v2H0zM3 7h2v4H3zM6 5h2v6H6zM9 2h2.500v9H9z" fill="#2eb50c" stroke="#1d8c04" strokeWidth=".6" />
          <rect x="12.500" y=".5" width="2" height="10" fill="#eee" stroke="#a8a8a8" strokeWidth=".8" />
        </svg>
        201.03 ms
      </span>
    </footer>
  );
}

export default function App() {
  return (
    <div className="flex h-screen w-full flex-col overflow-hidden bg-[#f0f0f0] font-['Open_Sans','Noto_Sans',sans-serif] text-black">
      <TitleBar />
      <MenuBar />
      <MainToolbar />
      <TimeframeBar />
      <main className="flex min-h-0 flex-1">
        <aside className="flex w-[229px] shrink-0 flex-col border-r border-b border-[#a0a0a0]">
          <MarketWatch />
          <Navigator />
        </aside>
        <div className="flex min-w-0 flex-1 flex-col pr-px pl-px">
          <Chart />
          <ChartTabs />
        </div>
      </main>
      <Toolbox />
      <StatusBar />
      <div className="h-[39px] shrink-0 border-b border-l border-[#a9c1d9] bg-white" />
    </div>
  );
}
